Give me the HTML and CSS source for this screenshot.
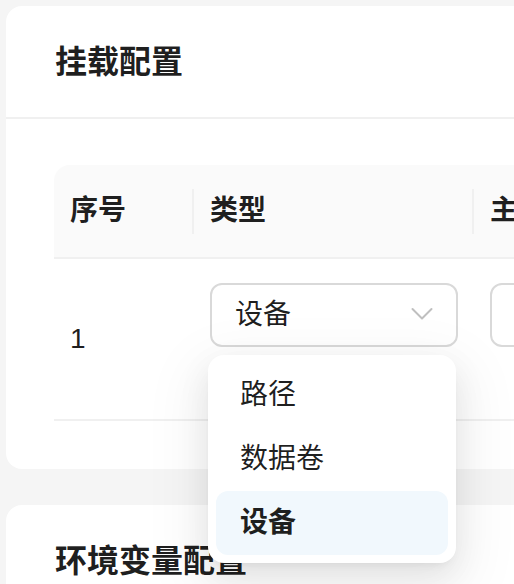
FILE: index.html
```html
<!DOCTYPE html>
<html lang="zh-CN">
<head>
<meta charset="utf-8">
<title>挂载配置</title>
<link rel="stylesheet" href="styles.css">
</head>
<body>
<div class="page">
  <section class="card">
    <header class="card-head"><h2 class="card-title">挂载配置</h2></header>
    <div class="card-body">
      <div class="table">
        <div class="thead">
          <div class="th"><span>序号</span><i class="sep"></i></div>
          <div class="th"><span>类型</span><i class="sep"></i></div>
          <div class="th"><span>主机路径</span></div>
        </div>
        <div class="trow">
          <div class="td td-index">1</div>
          <div class="td">
            <div class="form-item">
              <div class="select-wrap">
                <div class="select">
                  <span class="select-value">设备</span>
                  <svg class="chevron" width="22" height="14" viewBox="0 0 22 14"><polyline points="1.5,2 11,11.5 20.5,2" fill="none" stroke="#bfbfbf" stroke-width="2" stroke-linecap="round" stroke-linejoin="round"/></svg>
                </div>
                <div class="dropdown">
                  <div class="option">路径</div>
                  <div class="option">数据卷</div>
                  <div class="option selected">设备</div>
                </div>
              </div>
            </div>
          </div>
          <div class="td">
            <div class="form-item">
              <div class="select input"></div>
            </div>
          </div>
        </div>
      </div>
    </div>
  </section>
  <section class="card">
    <header class="card-head"><h2 class="card-title">环境变量配置</h2></header>
    <div class="card-body tall"></div>
  </section>
</div>
</body>
</html>
```

FILE: styles.css
```css
* { box-sizing: border-box; }
html, body {
  margin: 0;
  padding: 0;
  background: #f5f5f5;
  overflow: hidden;
}
body {
  font-family: "Liberation Sans", "Noto Sans CJK SC", sans-serif;
  color: rgba(0, 0, 0, 0.88);
}
.page {
  padding: 6px;
  width: 1100px;
}
.card {
  background: #fff;
  border-radius: 16px;
}
.card + .card {
  margin-top: 36px;
}
.card-head {
  height: 113px;
  border-bottom: 2px solid #f0f0f0;
  padding: 0 49px;
  display: flex;
  align-items: center;
}
.card-title {
  margin: 0;
  font-size: 32px;
  font-weight: 600;
  line-height: 44px;
}
.card-body {
  padding: 46px 48px 48px;
}
.card-body.tall {
  height: 300px;
}
.table {
  display: grid;
  grid-template-columns: 140px 280px 500px;
}
.thead, .trow {
  display: contents;
}
.th {
  background: #fafafa;
  height: 94px;
  border-bottom: 2px solid #f0f0f0;
  padding-left: 16px;
  display: flex;
  align-items: center;
  justify-content: space-between;
  font-size: 28px;
  font-weight: 600;
  line-height: 44px;
}
.th:first-child {
  border-top-left-radius: 16px;
}
.sep {
  width: 2px;
  height: 45px;
  background: #f0f0f0;
}
.td {
  border-bottom: 2px solid #f0f0f0;
  padding: 24px 16px;
  font-size: 28px;
  line-height: 44px;
}
.td-index {
  display: flex;
  align-items: center;
}
.form-item {
  margin-bottom: 48px;
}
.select-wrap {
  position: relative;
  z-index: 5;
}
.select {
  height: 64px;
  border: 2px solid #d9d9d9;
  border-radius: 12px;
  padding: 0 22px 0 23px;
  display: flex;
  align-items: center;
  justify-content: space-between;
  background: #fff;
}
.select.input {
  width: 400px;
}
.chevron {
  display: block;
  margin-top: -2px;
  margin-right: 1px;
}
.dropdown {
  position: absolute;
  top: 72px;
  left: -2px;
  width: 248px;
  background: #fff;
  border-radius: 16px;
  padding: 8px;
  box-shadow: 0 12px 32px 0 rgba(0, 0, 0, 0.08),
              0 6px 12px -8px rgba(0, 0, 0, 0.12),
              0 18px 56px 16px rgba(0, 0, 0, 0.05);
}
.option {
  height: 64px;
  padding: 0 24px;
  display: flex;
  align-items: center;
  border-radius: 12px;
  font-size: 28px;
  line-height: 44px;
}
.option.selected {
  background: #f1f8fd;
  font-weight: 600;
}
```
